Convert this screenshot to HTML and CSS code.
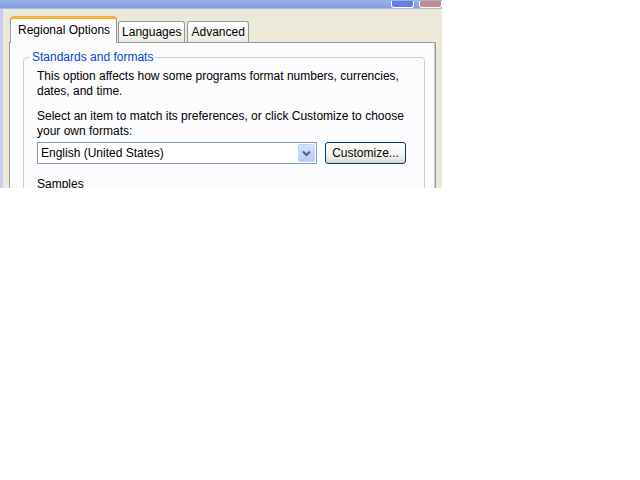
FILE: index.html
```html
<!DOCTYPE html>
<html>
<head>
<meta charset="utf-8">
<link rel="stylesheet" href="styles.css">
</head>
<body>
<div class="window">
  <div class="titlebar">
    <span class="tb-btn tb-blue"></span>
    <span class="tb-btn tb-red"></span>
  </div>
  <div class="dialog">
    <div class="tabs">
      <div class="tab selected">Regional Options</div>
      <div class="tab">Languages</div>
      <div class="tab">Advanced</div>
    </div>
    <div class="panel">
      <fieldset class="group">
        <legend>Standards and formats</legend>
        <p class="para first">This option affects how some programs format numbers, currencies, dates, and time.</p>
        <p class="para">Select an item to match its preferences, or click Customize to choose your own formats:</p>
        <div class="row">
          <div class="select">
            <span class="select-text">English (United States)</span>
            <span class="select-btn">
              <svg width="9" height="7" viewBox="0 0 9 7"><path d="M1 1.5 L4.5 5 L8 1.5" fill="none" stroke="#4d6185" stroke-width="2"/></svg>
            </span>
          </div>
          <div class="button">Customize...</div>
        </div>
        <div class="samples">Samples</div>
      </fieldset>
    </div>
  </div>
</div>
</body>
</html>
```
FILE: styles.css
```css
html, body {
  margin: 0;
  padding: 0;
  background: #ffffff;
}
body {
  font-family: "Liberation Sans", Arial, sans-serif;
  font-size: 12px;
  color: #000000;
}
.window {
  width: 442px;
  height: 188px;
  background: #ece9d8;
  overflow: hidden;
  display: flex;
  flex-direction: column;
  box-shadow: inset 3px 0 0 #c4cfef;
}
.titlebar {
  height: 8px;
  flex: none;
  background: linear-gradient(#9cb2ea, #7f9ce5);
  display: flex;
  justify-content: flex-end;
  align-items: flex-end;
  gap: 5px;
  padding-right: 0;
  border-bottom: 1px solid #a8b8e8;
}
.tb-btn {
  width: 21px;
  height: 6px;
  border: 1px solid #ffffff;
  border-top: none;
  border-radius: 0 0 3px 3px;
}
.tb-blue { background: #5f82e2; }
.tb-red { background: #c98a8a; }
.dialog {
  padding-left: 9px;
  padding-right: 6px;
}
.tabs {
  display: flex;
  align-items: flex-end;
  height: 34px;
  padding-left: 1px;
  gap: 2px;
  position: relative;
  z-index: 1;
  margin-bottom: -1px;
}
.tab {
  height: 20px;
  line-height: 20px;
  padding: 0 3px;
  border: 1px solid #919b9c;
  border-bottom: none;
  border-radius: 3px 3px 0 0;
  background: linear-gradient(#ffffff, #f3f2ec 80%, #ebe9df);
  margin-bottom: 1px;
  white-space: nowrap;
}
.tab.selected {
  height: 24px;
  line-height: 22px;
  padding: 0 6px 0 7px;
  margin-right: -1px;
  background: #fcfcfe;
  border-top: 3px solid #f2b53c;
  border-radius: 4px 4px 0 0;
  margin-bottom: 0;
}
.panel {
  background: #fcfcfe;
  border: 1px solid #919b9c;
  height: 200px;
  padding: 7px 10px 0 13px;
  box-shadow: inset -1px 0 0 #d0cfc5;
}
.group {
  margin: 0;
  border: 1px solid #d0d0bf;
  border-radius: 4px;
  padding: 0 10px 0 13px;
  min-width: 0;
}
.group legend {
  color: #0046d5;
  padding: 0 2px;
  margin-left: -7px;
  line-height: 14px;
}
.para {
  margin: 5px 0 0 0;
  line-height: 15px;
}
.para + .para {
  margin-top: 10px;
}
.row {
  display: flex;
  align-items: center;
  margin-top: 3px;
}
.select {
  width: 278px;
  height: 20px;
  border: 1px solid #7f9db9;
  background: #ffffff;
  display: flex;
  align-items: center;
  justify-content: space-between;
}
.select-text {
  padding-left: 3px;
}
.select-btn {
  width: 17px;
  height: 18px;
  margin-right: 1px;
  background: linear-gradient(#d6e3fd, #b8cbf6);
  border: 1px solid #c3d3fd;
  box-sizing: border-box;
  display: flex;
  align-items: center;
  justify-content: center;
  border-radius: 2px;
}
.button {
  margin-left: 8px;
  width: 79px;
  height: 20px;
  border: 1px solid #003c74;
  border-radius: 3px;
  background: linear-gradient(#ffffff, #f0f0ea 70%, #d8d4c8);
  display: flex;
  align-items: center;
  justify-content: center;
  box-shadow: inset 0 -1px 0 #d6d0c5;
}
.samples {
  margin-top: 13px;
  line-height: 15px;
}
```
